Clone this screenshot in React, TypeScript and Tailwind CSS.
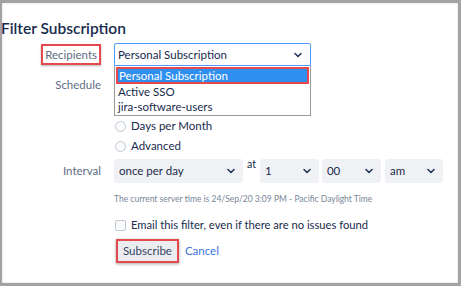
import { ChevronDown } from 'lucide-react';

const font = { fontFamily: 'Lato, "Open Sans", sans-serif' };

const GraySelect = ({ value, width }: { value: string; width: string }) => (
    <div className={`${width} h-[24px] bg-[#f0f1f4] rounded-[3px] flex items-center justify-between pl-[5px] pr-[6px] text-[11.5px] text-[#172b4d]`}>
        <span>{value}</span>
        <ChevronDown className="w-[12px] h-[12px] text-[#253858]" strokeWidth={3.2} />
    </div>
);

const Radio = ({ label }: { label?: string }) => (
    <div className="h-[20px] flex items-center gap-[5px]">
        <span className="w-[11px] h-[11px] rounded-full border border-[#c1c7d0] bg-[#fafbfc] ml-[1px]" />
        {label && <span className="text-[11.5px] leading-[14px] text-[#172b4d]">{label}</span>}
    </div>
);

export default function App() {
    return (
        <div
            className="w-[461px] h-[286px] bg-white border-t-[3px] border-l-[2px] border-r-[3px] border-b-[3px] border-[#a3a3a3] shadow-[inset_0_0_2px_#c8c8c8] overflow-hidden"
            style={font}
        >
            <h1 className="text-[15.5px] font-semibold text-[#172b4d] mt-[15px] -ml-[1px] leading-[20px]">
                Filter Subscription
            </h1>

            <div className="mt-[5px] flex flex-col">
                {/* Recipients */}
                <div className="flex items-center h-[23px]">
                    <div className="w-[99px] flex justify-end">
                        <span className="border-2 border-[#e5484d] shadow-[0_1px_2px_rgba(0,0,0,0.3)] px-[2px] h-[21px] flex items-center text-[11.5px] text-[#5e6c84]">
                            Recipients
                        </span>
                    </div>
                    <div className="relative ml-[13px]">
                        <div className="w-[197px] h-[23px] border border-[#4c9aff] rounded-t-[2px] flex items-center justify-between pl-[3px] pr-[6px] text-[11.5px] leading-[14px] text-[#172b4d] bg-white">
                            <span>Personal Subscription</span>
                            <ChevronDown className="w-[12px] h-[12px] text-[#253858]" strokeWidth={3.2} />
                        </div>
                        <div className="absolute left-0 top-[23px] w-[197px] bg-white border-x border-b border-[#9a9a9a] z-10 text-[11.5px] leading-[14px] text-[#172b4d] pb-[1px]">
                            <div className="mx-[1px] mt-[1px] h-[17px] bg-[#2f8ff0] border-2 border-[#e5484d] text-white flex items-center pl-[1px]">
                                Personal Subscription
                            </div>
                            <div className="h-[15px] flex items-center pl-[3px]">Active SSO</div>
                            <div className="h-[15px] flex items-center pl-[3px]">jira-software-users</div>
                        </div>
                    </div>
                </div>

                {/* Schedule */}
                <div className="flex mt-[8px]">
                    <div className="w-[99px] text-right text-[11.5px] text-[#5e6c84] leading-[20px] pt-[1px]">Schedule</div>
                    <div className="ml-[13px] flex flex-col pt-[2px]">
                        <Radio />
                        <Radio />
                        <Radio label="Days per Month" />
                        <Radio label="Advanced" />
                    </div>
                </div>

                {/* Interval */}
                <div className="flex items-center mt-[3px]">
                    <div className="w-[99px] text-right text-[11.5px] text-[#5e6c84]">Interval</div>
                    <div className="ml-[13px] flex items-center">
                        <GraySelect value="once per day" width="w-[129px]" />
                        <span className="text-[10.5px] text-[#172b4d] self-start -mt-[2px] mx-[4px] leading-[14px]">at</span>
                        <GraySelect value="1" width="w-[59px]" />
                        <div className="w-[3px]" />
                        <GraySelect value="00" width="w-[59px]" />
                        <div className="w-[4px]" />
                        <GraySelect value="am" width="w-[58px]" />
                    </div>
                </div>

                <div className="ml-[112px] mt-[10px] text-[8.5px] text-[#7a869a] leading-[12px]">
                    The current server time is 24/Sep/20 3:09 PM - Pacific Daylight Time
                </div>

                <div className="ml-[113px] mt-[12px] flex items-center gap-[5px]">
                    <span className="w-[11px] h-[11px] rounded-[2px] border border-[#c1c7d0] bg-[#fafbfc]" />
                    <span className="text-[11.2px] text-[#172b4d]">Email this filter, even if there are no issues found</span>
                </div>

                <div className="ml-[114px] mt-[5px] flex items-center gap-[6px]">
                    <button className="h-[24px] px-[5px] border-2 border-[#e5484d] bg-[#ebecf0] shadow-[0_1px_3px_rgba(0,0,0,0.35)] text-[11.5px] text-[#344563]">
                        Subscribe
                    </button>
                    <span className="text-[11.5px] text-[#3b73d9]">Cancel</span>
                </div>
            </div>
        </div>
    );
}
